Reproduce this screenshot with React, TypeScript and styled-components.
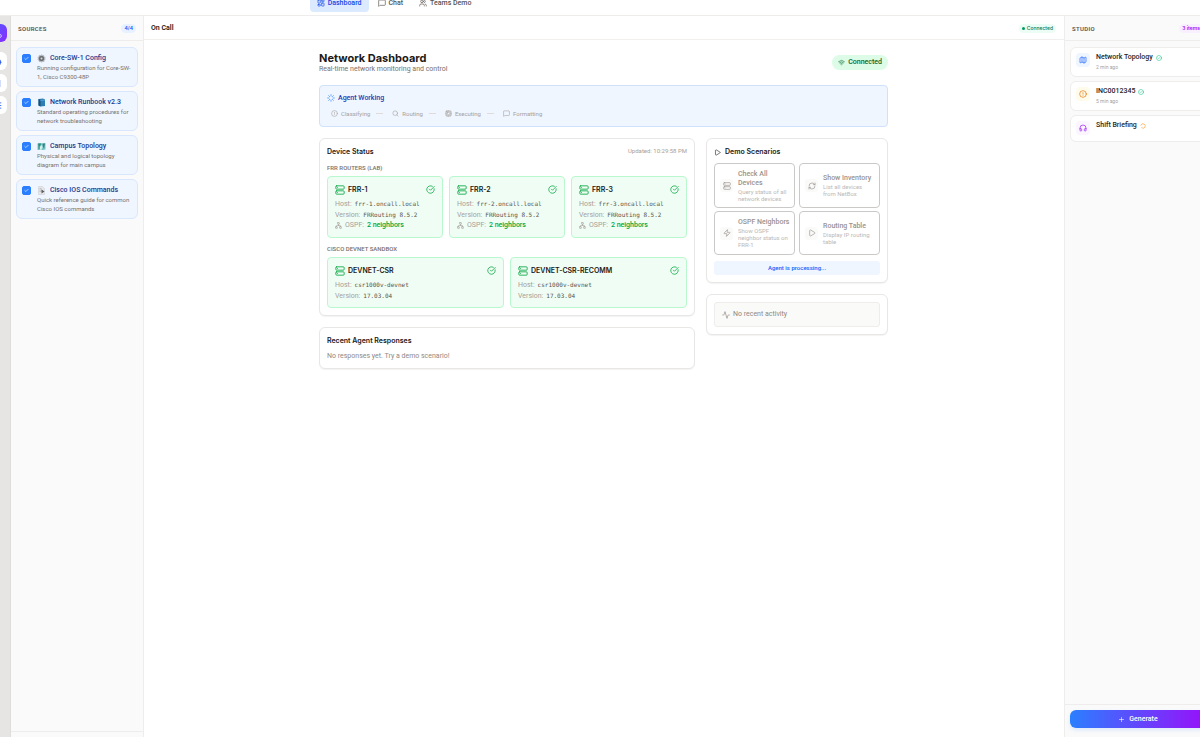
import React, { useState } from 'react';
import styled, { createGlobalStyle, css } from 'styled-components';
import {
  Activity,
  Bot,
  Check,
  CircleAlert,
  CircleCheck,
  CircleCheckBig,
  Cpu,
  Headphones,
  LayoutDashboard,
  Loader,
  LoaderCircle,
  Map as MapIcon,
  MessageSquare,
  Network,
  Phone,
  Play,
  Plus,
  RectangleVertical,
  RefreshCw,
  Search,
  Server,
  SlidersHorizontal,
  Users,
  Wifi,
  Zap,
} from 'lucide-react';

const display = '"Inter", "Liberation Sans", sans-serif';
const text = '"Roboto", "Liberation Sans", sans-serif';
const mono = '"DejaVu Sans Mono", "Liberation Mono", monospace';

const GlobalStyle = createGlobalStyle`
  *, *::before, *::after { box-sizing: border-box; }
  html, body { margin: 0; padding: 0; }
  body { font-family: ${text}; font-size: 7px; line-height: 9px; color: #1c1917; background: #fff; }
  button { font: inherit; color: inherit; cursor: pointer; }
  h1, h2, h3, p, ul, dl, dd { margin: 0; padding: 0; }
  ul { list-style: none; }
  svg { display: block; flex: none; }
`;

const Shell = styled.div`
  height: 100vh;
  display: flex;
  flex-direction: column;
  overflow: hidden;
`;

const TopBar = styled.header`
  flex: none;
  height: 30px;
  margin-top: -14px;
  display: flex;
  align-items: center;
  justify-content: center;
  border-bottom: 1px solid #eeedec;
`;

const Tabs = styled.nav`
  display: flex;
  gap: 2px;
  margin-right: 412px;
  padding-top: 5px;
`;

const Tab = styled.button<{ $active?: boolean }>`
  display: flex;
  align-items: center;
  gap: 3px;
  height: 17px;
  padding: 0 7px;
  border: 0;
  border-radius: 4px;
  font-weight: 500;
  color: ${p => (p.$active ? '#1447e6' : '#57534d')};
  background: ${p => (p.$active ? '#dbeafe' : 'transparent')};
`;

const Body = styled.div`
  flex: 1;
  min-height: 0;
  display: grid;
  grid-template-columns: 26px 133px minmax(0, 1fr) 149px;
  margin: 0 -13px 0 -15px;
`;

const Rail = styled.aside`
  display: flex;
  flex-direction: column;
  align-items: center;
  gap: 4px;
  padding-top: 8px;
  background: #e7e5e4;
  border-right: 1px solid #dedddb;
`;

const RailButton = styled.button<{ $brand?: boolean }>`
  display: grid;
  place-items: center;
  width: 18px;
  height: 18px;
  padding: 0;
  border: 0;
  border-radius: 6px;
  color: #1447e6;
  background: #fff;
  ${p =>
    p.$brand &&
    css`
      margin-bottom: 6px;
      color: #fff;
      background: linear-gradient(135deg, #4f5bff, #8a2bff);
    `}
`;

const Panel = styled.section`
  display: flex;
  flex-direction: column;
  min-height: 0;
  background: #fafafa;
  border-right: 1px solid #eeedec;
`;

const StudioPanel = styled(Panel)`
  border-right: 0;
  border-left: 1px solid #eeedec;
`;

const PanelHead = styled.div`
  display: flex;
  align-items: center;
  justify-content: space-between;
  height: 25px;
  padding: 0 7px;
  border-bottom: 1px solid #eeedec;
`;

const PanelTitle = styled.h2`
  font-size: 6px;
  font-weight: 600;
  letter-spacing: 0.05em;
  text-transform: uppercase;
  color: #57534d;
`;

const Count = styled.span<{ $tone: 'blue' | 'purple' }>`
  padding: 0 3px;
  border-radius: 5px;
  font-family: ${display};
  font-size: 5px;
  font-weight: 600;
  color: ${p => (p.$tone === 'blue' ? '#155dfc' : '#9810fa')};
  background: ${p => (p.$tone === 'blue' ? '#e8f1ff' : '#f8f0ff')};
`;

const CardList = styled.ul`
  flex: 1;
  display: flex;
  flex-direction: column;
  gap: 4px;
  padding: 6px 5px;
`;

const SourceCard = styled.label`
  display: flex;
  gap: 6px;
  height: 40px;
  padding: 5px;
  border: 1px solid #d8e7fd;
  border-radius: 6px;
  background: #eff6ff;
`;

const Tick = styled.span`
  position: relative;
  flex: none;
  width: 9px;
  height: 9px;
  margin-top: 1px;
  svg { position: absolute; top: 2px; left: 2px; color: #fff; pointer-events: none; }
`;

const TickInput = styled.input`
  appearance: none;
  display: block;
  width: 9px;
  height: 9px;
  margin: 0;
  border: 1px solid #2b7fff;
  border-radius: 2px;
  background: #fff;
  &:checked { background: #2b7fff; }
`;

const SourceName = styled.span`
  display: flex;
  align-items: center;
  gap: 4px;
  height: 11px;
  font-weight: 500;
  color: #1c398e;
`;

const SourceInfo = styled.span`
  display: flex;
  flex-direction: column;
  min-width: 0;
`;

const SourceText = styled.span`
  font-size: 6px;
  color: #79716b;
`;

const PanelFoot = styled.div`
  height: 6px;
  border-top: 1px solid #eeedec;
`;

const Main = styled.main`
  display: flex;
  flex-direction: column;
  min-width: 0;
`;

const MainHead = styled.div`
  display: flex;
  align-items: center;
  justify-content: space-between;
  height: 24px;
  padding: 1px 8px 0 7px;
  border-bottom: 1px solid #f0efee;
`;

const PageName = styled.h2`
  font-size: 7px;
  line-height: 9px;
  font-weight: 600;
`;

const LiveBadge = styled.span`
  display: flex;
  align-items: center;
  gap: 2px;
  height: 9px;
  padding: 0 3px;
  border-radius: 5px;
  font-family: ${display};
  font-size: 5px;
  font-weight: 500;
  color: #007a55;
  background: #ecfdf5;
  &::before { content: ''; width: 3px; height: 3px; border-radius: 50%; background: #009966; }
`;

const Content = styled.div`
  width: 100%;
  max-width: 570px;
  margin: 0 auto;
  padding: 11px 1px 0 0;
  display: flex;
  flex-direction: column;
  gap: 11px;
`;

const TitleRow = styled.div`
  display: flex;
  align-items: center;
  justify-content: space-between;
`;

const Title = styled.h1`
  font-family: ${display};
  font-size: 11px;
  line-height: 14px;
  font-weight: 700;
`;

const Subtitle = styled.p`
  color: #79716b;
`;

const OnlinePill = styled.span`
  display: flex;
  align-items: center;
  gap: 3px;
  height: 15px;
  padding: 0 6px;
  border-radius: 8px;
  font-weight: 500;
  color: #016630;
  background: #dcfce7;
`;

const Banner = styled.section`
  height: 42px;
  padding: 7px;
  border: 1px solid #cfe1fb;
  border-radius: 4px;
  background: #eff6ff;
`;

const BannerTitle = styled.h2`
  display: flex;
  align-items: center;
  gap: 3px;
  font-size: 7px;
  line-height: 10px;
  font-weight: 500;
  color: #193cb8;
`;

const Steps = styled.ul`
  display: flex;
  align-items: center;
  gap: 9px;
  padding: 6px 4px;
`;

const Step = styled.li`
  display: flex;
  align-items: center;
  gap: 3px;
  font-size: 6px;
  color: #a6a09b;
  &:not(:last-child)::after {
    content: '';
    width: 7px;
    height: 1px;
    margin-left: 3px;
    background: #dedbd9;
  }
`;

const Columns = styled.div`
  display: grid;
  grid-template-columns: minmax(0, 1fr) 182px;
  gap: 11px;
  align-items: start;
`;

const Stack = styled.div`
  display: flex;
  flex-direction: column;
  gap: 11px;
`;

const Card = styled.section`
  padding: 7px;
  border: 1px solid #e9e7e6;
  border-radius: 6px;
  background: #fff;
  box-shadow: 0 1px 1px rgba(0, 0, 0, 0.05);
`;

const CardHead = styled.div`
  display: flex;
  align-items: flex-start;
  justify-content: space-between;
  height: 11px;
`;

const CardTitle = styled.h2`
  display: flex;
  align-items: center;
  gap: 4px;
  font-family: ${display};
  font-size: 7px;
  line-height: 12px;
  font-weight: 600;
`;

const Stamp = styled.span`
  font-size: 6px;
  color: #a6a09b;
`;

const GroupLabel = styled.h3`
  margin-top: 6px;
  font-size: 6px;
  line-height: 9px;
  font-weight: 500;
  text-transform: uppercase;
  color: #79716b;
`;

const DeviceGrid = styled.div<{ $columns: number }>`
  display: grid;
  grid-template-columns: repeat(${p => p.$columns}, minmax(0, 1fr));
  gap: 6px;
  margin-top: 4px;
`;

const Device = styled.article`
  padding: 6px 7px;
  border: 1px solid #b9f8cf;
  border-radius: 4px;
  background: #f0fdf4;
  color: #00a63e;
`;

const DeviceHead = styled.div`
  display: flex;
  align-items: center;
  justify-content: space-between;
  height: 13px;
`;

const DeviceName = styled.h3`
  display: flex;
  align-items: center;
  gap: 3px;
  font-family: ${display};
  font-size: 7px;
  line-height: 13px;
  font-weight: 600;
  span { color: #1c1917; }
`;

const Facts = styled.dl`
  padding-top: 2px;
`;

const Fact = styled.div<{ $withIcon?: boolean }>`
  display: flex;
  align-items: ${p => (p.$withIcon ? 'center' : 'baseline')};
  gap: 3px;
  height: 11px;
  line-height: 11px;
  dt { display: flex; align-items: center; gap: 3px; color: #a6a09b; }
  dd { font-family: ${mono}; font-size: 6px; color: #57534d; }
`;

const Neighbors = styled.dd`
  && { font-family: ${text}; font-size: 7px; font-weight: 500; color: #00a63e; }
`;

const Empty = styled.p`
  margin-top: 4px;
  line-height: 10px;
  color: #8f8983;
`;

const ScenarioGrid = styled.div`
  display: grid;
  grid-template-columns: 1fr 1fr;
  grid-template-rows: 45px 44px;
  gap: 3px 4px;
  margin-top: 5px;
`;

const Scenario = styled.button`
  display: flex;
  align-items: center;
  gap: 5px;
  padding: 0 3px 0 5px;
  border: 1px solid #cbc9c8;
  border-radius: 4px;
  text-align: left;
  background: #fff;
  color: #98938f;
`;

const ScenarioIcon = styled.span`
  display: grid;
  place-items: center;
  flex: none;
  width: 13px;
  height: 13px;
  border-radius: 3px;
  background: #fafaf9;
`;

const ScenarioName = styled.span`
  display: block;
  font-weight: 500;
  line-height: 9px;
`;

const ScenarioText = styled.span`
  display: block;
  font-size: 6px;
  line-height: 7px;
  color: #bcb8b5;
`;

const Processing = styled.p`
  margin-top: 6px;
  border-radius: 3px;
  font-size: 6px;
  line-height: 14px;
  font-weight: 500;
  text-align: center;
  color: #155dfc;
  background: #eff6ff;
`;

const NoActivity = styled.div`
  display: flex;
  align-items: center;
  gap: 3px;
  height: 25px;
  padding: 0 7px;
  border: 1px solid #eeedec;
  border-radius: 3px;
  color: #8f8983;
  background: #fafaf9;
`;

const Artifact = styled.li<{ $short?: boolean }>`
  display: flex;
  gap: 6px;
  height: ${p => (p.$short ? 27 : 30)}px;
  padding: 5px;
  border: 1px solid #eeedec;
  border-radius: 6px;
  background: #fff;
`;

const tones = {
  blue: ['#155dfc', '#eff6ff'],
  amber: ['#e17100', '#fffbeb'],
  purple: ['#9810fa', '#faf5ff'],
};

const ArtifactIcon = styled.span<{ $tone: keyof typeof tones }>`
  display: grid;
  place-items: center;
  width: 14px;
  height: 14px;
  border-radius: 4px;
  color: ${p => tones[p.$tone][0]};
  background: ${p => tones[p.$tone][1]};
`;

const ArtifactName = styled.h3<{ $pending?: boolean }>`
  display: flex;
  align-items: center;
  gap: 3px;
  font-size: 7px;
  line-height: 9px;
  font-weight: 500;
  color: #292524;
  svg {
    color: ${p => (p.$pending ? '#ff8904' : '#00bc7d')};
    transform: ${p => (p.$pending ? 'rotate(200deg)' : 'none')};
  }
`;

const Age = styled.p`
  margin-top: 1px;
  font-size: 5px;
  color: #a6a09b;
`;

const StudioFoot = styled.div`
  height: 33px;
  padding: 5px 7px 0 5px;
  border-top: 1px solid #eeedec;
`;

const Generate = styled.button`
  display: flex;
  align-items: center;
  justify-content: center;
  gap: 4px;
  width: 100%;
  height: 18px;
  border: 0;
  border-radius: 6px;
  font-weight: 500;
  color: #fff;
  background: linear-gradient(90deg, #2b7fff, #9810fa);
  box-shadow: 0 2px 4px rgba(43, 127, 255, 0.15);
`;

const StudioHead = styled(PanelHead)`
  padding-right: 10px;
`;

const GearPicture = () => (
  <svg width="9" height="9" viewBox="0 0 18 18" aria-hidden="true">
    <circle cx="9" cy="9" r="6.5" fill="#8f9296" stroke="#b9bcc0" strokeWidth="3" strokeDasharray="2.6 1.5" />
    <circle cx="9" cy="9" r="5" fill="#696c71" />
    <circle cx="9" cy="9" r="2" fill="#d9dbdd" />
  </svg>
);

const BookPicture = () => (
  <svg width="9" height="9" viewBox="0 0 18 18" aria-hidden="true">
    <path d="M3 2l9-1 4 2v13l-9 1-4-2z" fill="#2f7fb5" />
    <path d="M3 2l4 2v13l-4-2z" fill="#1b4f78" />
    <path d="M7 4l9-1v2l-9 1z" fill="#5aa3d2" />
  </svg>
);

const MapPicture = () => (
  <svg width="9" height="9" viewBox="0 0 18 18" aria-hidden="true">
    <path d="M1 3l5-1 6 1 5-1v13l-5 1-6-1-5 1z" fill="#78c5c4" />
    <path d="M2 3h6l-1 4-2 2v6H3V8z" fill="#2e8b83" />
    <path d="M11 3h5l-1 5-1 6-2-5z" fill="#357f86" />
    <path d="M6 9l3-3 2 4-2 5H6z" fill="#d8efe8" />
  </svg>
);

const PagePicture = () => (
  <svg width="9" height="9" viewBox="0 0 18 18" aria-hidden="true">
    <path d="M3 1h8l4 4v12H3z" fill="#e6e7e9" stroke="#c9cbce" />
    <path d="M5 5h4M5 8h5M5 11h4" stroke="#9a9da1" />
    <path d="M9 7l6 4-6 4z" fill="#585b60" />
  </svg>
);

const sources = [
  { id: 'core', name: 'Core-SW-1 Config', detail: 'Running configuration for Core-SW-1, Cisco C9300-48P', picture: <GearPicture /> },
  { id: 'runbook', name: 'Network Runbook v2.3', detail: 'Standard operating procedures for network troubleshooting', picture: <BookPicture /> },
  { id: 'campus', name: 'Campus Topology', detail: 'Physical and logical topology diagram for main campus', picture: <MapPicture /> },
  { id: 'ios', name: 'Cisco IOS Commands', detail: 'Quick reference guide for common Cisco IOS commands', picture: <PagePicture /> },
];

const routers = ['FRR-1', 'FRR-2', 'FRR-3'];
const sandbox = ['DEVNET-CSR', 'DEVNET-CSR-RECOMM'];

const scenarios = [
  { name: 'Check All Devices', detail: 'Query status of all network devices', icon: Server },
  { name: 'Show Inventory', detail: 'List all devices from NetBox', icon: RefreshCw },
  { name: 'OSPF Neighbors', detail: 'Show OSPF neighbor status on FRR-1', icon: Zap },
  { name: 'Routing Table', detail: 'Display IP routing table', icon: Play },
];

const steps = [
  { name: 'Classifying', icon: CircleAlert },
  { name: 'Routing', icon: Search },
  { name: 'Executing', icon: Cpu },
  { name: 'Formatting', icon: MessageSquare },
];

function DeviceCard({ name, host, version, neighbors }: { name: string; host: string; version: string; neighbors?: string }) {
  return (
    <Device>
      <DeviceHead>
        <DeviceName><Server size={10} /><span>{name}</span></DeviceName>
        <CircleCheckBig size={9} />
      </DeviceHead>
      <Facts>
        <Fact><dt>Host:</dt><dd>{host}</dd></Fact>
        <Fact><dt>Version:</dt><dd>{version}</dd></Fact>
        {neighbors && <Fact $withIcon><dt><Network size={7} />OSPF:</dt><Neighbors>{neighbors}</Neighbors></Fact>}
      </Facts>
    </Device>
  );
}

export default function App() {
  const [selected, setSelected] = useState<string[]>(sources.map(s => s.id));
  const toggle = (id: string) =>
    setSelected(list => (list.includes(id) ? list.filter(x => x !== id) : [...list, id]));

  return (
    <>
      <GlobalStyle />
      <Shell>
        <TopBar>
          <Tabs>
            <Tab $active><LayoutDashboard size={8} />Dashboard</Tab>
            <Tab><MessageSquare size={8} />Chat</Tab>
            <Tab><Users size={8} />Teams Demo</Tab>
          </Tabs>
        </TopBar>
        <Body>
          <Rail>
            <RailButton $brand aria-label="Home"><Phone size={9} /></RailButton>
            <RailButton aria-label="Agent"><Bot size={9} /></RailButton>
            <RailButton aria-label="Documents"><RectangleVertical size={9} /></RailButton>
            <RailButton aria-label="Settings"><SlidersHorizontal size={9} /></RailButton>
          </Rail>

          <Panel>
            <PanelHead>
              <PanelTitle>Sources</PanelTitle>
              <Count $tone="blue">{selected.length}/{sources.length}</Count>
            </PanelHead>
            <CardList>
              {sources.map(s => (
                <li key={s.id}>
                  <SourceCard>
                    <Tick>
                      <TickInput type="checkbox" checked={selected.includes(s.id)} onChange={() => toggle(s.id)} />
                      <Check size={5} strokeWidth={3} />
                    </Tick>
                    <SourceInfo>
                      <SourceName>{s.picture}{s.name}</SourceName>
                      <SourceText>{s.detail}</SourceText>
                    </SourceInfo>
                  </SourceCard>
                </li>
              ))}
            </CardList>
            <PanelFoot />
          </Panel>

          <Main>
            <MainHead>
              <PageName>On Call</PageName>
              <LiveBadge>Connected</LiveBadge>
            </MainHead>
            <Content>
              <TitleRow>
                <div>
                  <Title>Network Dashboard</Title>
                  <Subtitle>Real-time network monitoring and control</Subtitle>
                </div>
                <OnlinePill><Wifi size={7} />Connected</OnlinePill>
              </TitleRow>

              <Banner>
                <BannerTitle><Loader size={8} color="#2b7fff" />Agent Working</BannerTitle>
                <Steps>
                  {steps.map(({ name, icon: Icon }) => (
                    <Step key={name}><Icon size={7} />{name}</Step>
                  ))}
                </Steps>
              </Banner>

              <Columns>
                <Stack>
                  <Card>
                    <CardHead>
                      <CardTitle>Device Status</CardTitle>
                      <Stamp>Updated: 10:29:58 PM</Stamp>
                    </CardHead>
                    <GroupLabel>FRR Routers (Lab)</GroupLabel>
                    <DeviceGrid $columns={3}>
                      {routers.map(name => (
                        <DeviceCard key={name} name={name} host={`${name.toLowerCase()}.oncall.local`} version="FRRouting 8.5.2" neighbors="2 neighbors" />
                      ))}
                    </DeviceGrid>
                    <GroupLabel>Cisco DevNet Sandbox</GroupLabel>
                    <DeviceGrid $columns={2}>
                      {sandbox.map(name => (
                        <DeviceCard key={name} name={name} host="csr1000v-devnet" version="17.03.04" />
                      ))}
                    </DeviceGrid>
                  </Card>
                  <Card>
                    <CardTitle>Recent Agent Responses</CardTitle>
                    <Empty>No responses yet. Try a demo scenario!</Empty>
                  </Card>
                </Stack>

                <Stack>
                  <Card>
                    <CardTitle><Play size={7} />Demo Scenarios</CardTitle>
                    <ScenarioGrid>
                      {scenarios.map(({ name, detail, icon: Icon }) => (
                        <Scenario key={name}>
                          <ScenarioIcon><Icon size={8} /></ScenarioIcon>
                          <span>
                            <ScenarioName>{name}</ScenarioName>
                            <ScenarioText>{detail}</ScenarioText>
                          </span>
                        </Scenario>
                      ))}
                    </ScenarioGrid>
                    <Processing>Agent is processing...</Processing>
                  </Card>
                  <Card>
                    <NoActivity><Activity size={8} />No recent activity</NoActivity>
                  </Card>
                </Stack>
              </Columns>
            </Content>
          </Main>

          <StudioPanel>
            <StudioHead>
              <PanelTitle>Studio</PanelTitle>
              <Count $tone="purple">3 items</Count>
            </StudioHead>
            <CardList>
              <Artifact>
                <ArtifactIcon $tone="blue"><MapIcon size={8} /></ArtifactIcon>
                <div>
                  <ArtifactName>Network Topology<CircleCheck size={6} /></ArtifactName>
                  <Age>2 min ago</Age>
                </div>
              </Artifact>
              <Artifact>
                <ArtifactIcon $tone="amber"><CircleAlert size={8} /></ArtifactIcon>
                <div>
                  <ArtifactName>INC0012345<CircleCheck size={6} /></ArtifactName>
                  <Age>5 min ago</Age>
                </div>
              </Artifact>
              <Artifact $short>
                <ArtifactIcon $tone="purple"><Headphones size={8} /></ArtifactIcon>
                <div>
                  <ArtifactName $pending>Shift Briefing<LoaderCircle size={6} /></ArtifactName>
                </div>
              </Artifact>
            </CardList>
            <StudioFoot>
              <Generate><Plus size={7} />Generate</Generate>
            </StudioFoot>
          </StudioPanel>
        </Body>
      </Shell>
    </>
  );
}
